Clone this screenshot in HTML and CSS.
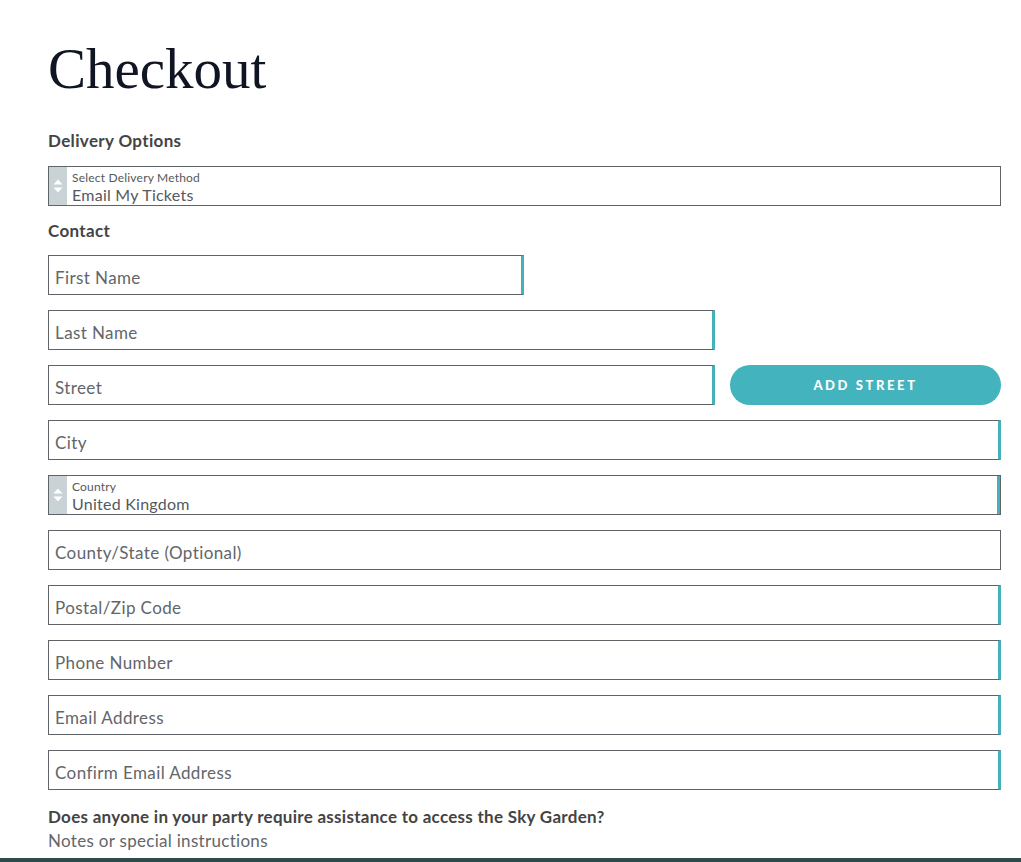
FILE: index.html
```html
<!DOCTYPE html>
<html lang="en">
<head>
    <meta charset="UTF-8">
    <meta name="viewport" content="width=device-width, initial-scale=1.0">
    <title>Checkout</title>
    <link rel="stylesheet" href="styles.css">
</head>
<body>
    <div id="checkout">
        <h1>Checkout</h1>

        <h2 class="section-title">Delivery Options</h2>
        <div class="field select-field">
            <span class="select-arrows">
                <svg width="10" height="16" viewBox="0 0 10 16"><path d="M5 1.5 L9.5 6.5 H0.5 Z M5 14.5 L9.5 9.5 H0.5 Z" fill="#fff"/></svg>
            </span>
            <div class="select-text">
                <span class="select-label">Select Delivery Method</span>
                <span class="select-value">Email My Tickets</span>
            </div>
        </div>

        <h2 class="section-title contact-title">Contact</h2>
        <div class="field required short">First Name</div>
        <div class="field required medium">Last Name</div>
        <div class="row">
            <div class="field required medium">Street</div>
            <button class="add-street">ADD STREET</button>
        </div>
        <div class="field required">City</div>
        <div class="field select-field required-inset">
            <span class="select-arrows">
                <svg width="10" height="16" viewBox="0 0 10 16"><path d="M5 1.5 L9.5 6.5 H0.5 Z M5 14.5 L9.5 9.5 H0.5 Z" fill="#fff"/></svg>
            </span>
            <div class="select-text">
                <span class="select-label">Country</span>
                <span class="select-value">United Kingdom</span>
            </div>
        </div>
        <div class="field">County/State (Optional)</div>
        <div class="field required">Postal/Zip Code</div>
        <div class="field required">Phone Number</div>
        <div class="field required">Email Address</div>
        <div class="field required">Confirm Email Address</div>

        <p class="question">Does anyone in your party require assistance to access the Sky Garden?</p>
        <p class="notes">Notes or special instructions</p>
    </div>
    <div class="footer-bar"></div>
</body>
</html>
```

FILE: styles.css
```css
body {
    font-family: Lato, 'Open Sans', sans-serif;
    background-color: #fff;
    color: #4a4a4a;
    margin: 0;
}
#checkout {
    padding: 0 20px 0 48px;
}
h1 {
    font-family: 'Liberation Serif', serif;
    font-weight: normal;
    font-size: 57px;
    line-height: 58px;
    color: #0f1522;
    margin: 40px 0 33px;
}
.section-title {
    font-size: 17px;
    font-weight: bold;
    line-height: 20px;
    letter-spacing: 0.35px;
    color: #444;
    margin: 0 0 15px;
}
.contact-title { margin-bottom: 14px; }
.field {
    box-sizing: border-box;
    height: 40px;
    border: 1px solid #606468;
    padding: 0 6px;
    display: flex;
    align-items: center;
    padding-top: 4px;
    font-size: 17px;
    letter-spacing: 0.4px;
    color: #62666a;
    margin-bottom: 15px;
}
.field.required {
    border-right: 3px solid #45b1ba;
}
.field.required-inset {
    box-shadow: inset -3px 0 0 #45b1ba;
}
.short { width: 476px; }
.medium { width: 667px; }
.row {
    display: flex;
    gap: 15px;
    margin-bottom: 15px;
}
.row .field { margin-bottom: 0; }
.add-street {
    flex: 1;
    height: 40px;
    border: none;
    border-radius: 20px;
    background-color: #43b3bd;
    color: #fff;
    font-family: Lato, sans-serif;
    font-weight: 900;
    font-size: 13px;
    letter-spacing: 2.6px;
    cursor: pointer;
}
.select-field {
    padding: 0;
    align-items: stretch;
    letter-spacing: 0;
}
.select-arrows {
    width: 18px;
    background-color: #c9d2d4;
    display: flex;
    align-items: center;
    justify-content: center;
}
.select-text {
    display: flex;
    flex-direction: column;
    justify-content: center;
    padding-left: 5px;
    padding-top: 2px;
}
.select-label {
    font-size: 12px;
    line-height: 14px;
    letter-spacing: 0.2px;
    color: #55595c;
}
.select-value {
    font-size: 16px;
    line-height: 19px;
    letter-spacing: 0.25px;
    color: #55595c;
}
.question {
    font-size: 17px;
    font-weight: bold;
    line-height: 24px;
    letter-spacing: 0.28px;
    color: #444;
    margin: 0;
    margin-top: 11px;
}
.notes {
    font-size: 17px;
    line-height: 24px;
    letter-spacing: 0.3px;
    color: #62666a;
    margin: 0;
}
.footer-bar {
    height: 6px;
    background-color: #2c4b4b;
    margin-top: 5px;
}
```
